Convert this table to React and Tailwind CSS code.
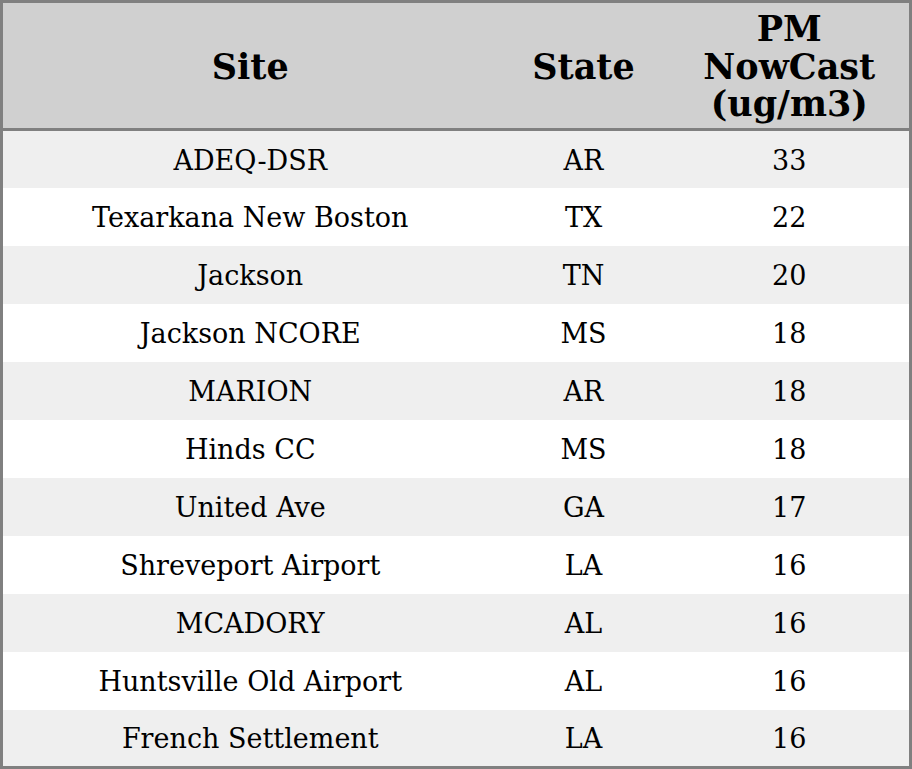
import React from "react";

const rows = [
  ["ADEQ-DSR", "AR", 33],
  ["Texarkana New Boston", "TX", 22],
  ["Jackson", "TN", 20],
  ["Jackson NCORE", "MS", 18],
  ["MARION", "AR", 18],
  ["Hinds CC", "MS", 18],
  ["United Ave", "GA", 17],
  ["Shreveport Airport", "LA", 16],
  ["MCADORY", "AL", 16],
  ["Huntsville Old Airport", "AL", 16],
  ["French Settlement", "LA", 16],
];

export default function App() {
  return (
    <div className="w-[912px] h-[769px] bg-white font-['DejaVu_Serif',serif] text-black">
      <table className="w-full h-full border-collapse border-[3px] border-[#808080] table-fixed">
        <colgroup>
          <col className="w-[496px]" />
          <col className="w-[172px]" />
          <col />
        </colgroup>
        <thead>
          <tr className="bg-[#d0d0d0] h-[128px] border-b-[3px] border-[#808080]">
            <th className="text-[35px] leading-[37.5px] font-bold pt-[2px]">Site</th>
            <th className="text-[35px] leading-[37.5px] font-bold pt-[2px]">State</th>
            <th className="text-[35px] leading-[37.5px] font-bold pt-[2px]">
              PM
              <br />
              NowCast
              <br />
              (ug/m3)
            </th>
          </tr>
        </thead>
        <tbody>
          {rows.map(([site, state, val], i) => (
            <tr
              key={site}
              className={i % 2 === 0 ? "bg-[#efefef] h-[57.7px]" : "bg-white h-[57.7px]"}
            >
              <td className="text-center text-[27px] pt-[3px]">{site}</td>
              <td className="text-center text-[27px] pt-[3px]">{state}</td>
              <td className="text-center text-[27px] pt-[3px]">{val}</td>
            </tr>
          ))}
        </tbody>
      </table>
    </div>
  );
}
